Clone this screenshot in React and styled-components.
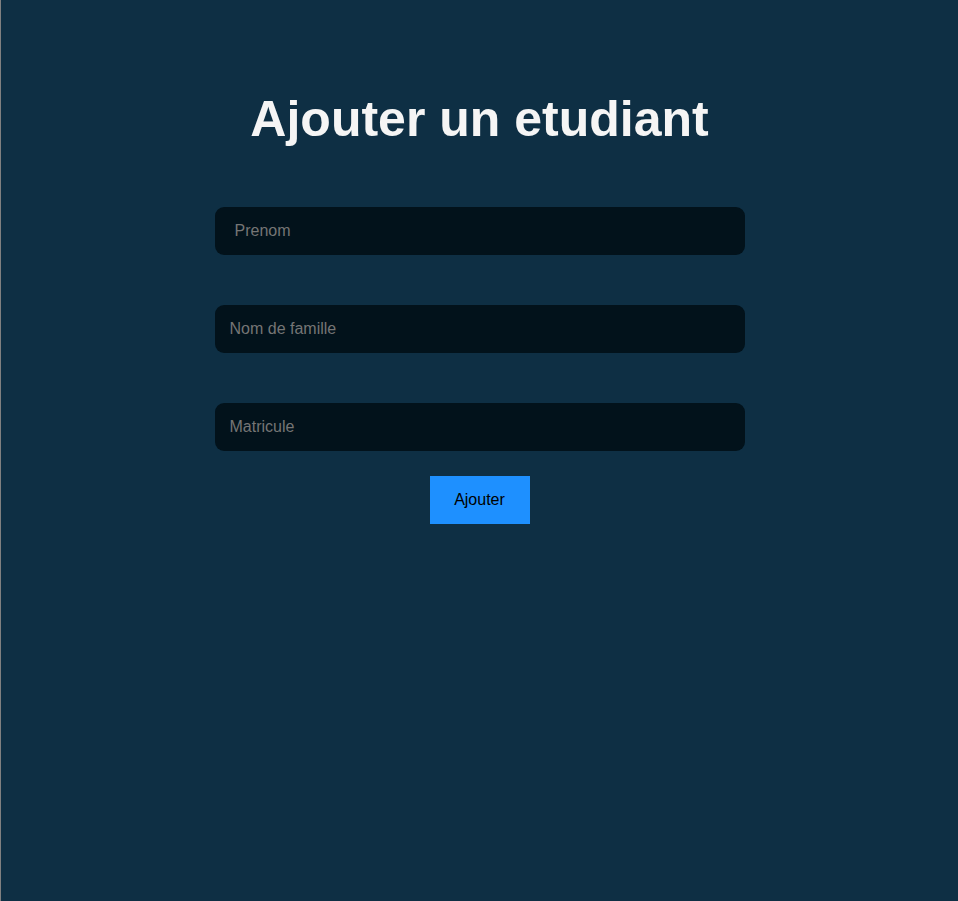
import React from 'react'
import styled, { createGlobalStyle } from 'styled-components'

const GlobalStyle = createGlobalStyle`
  html, body {
    margin: 0;
    padding: 0;
    background: #0e2f44;
    font-family: "Liberation Sans", Arial, sans-serif;
  }
`

const Page = styled.div`
  box-sizing: border-box;
  min-height: 100vh;
  border-left: 1px solid #808080;
  background: #0e2f44;
  display: flex;
  flex-direction: column;
  align-items: center;
  padding-top: 91px;
`

const Title = styled.h1`
  margin: 0 0 59px;
  font-size: 50px;
  font-weight: 700;
  line-height: 57px;
  color: #f5f5f5;
`

const Form = styled.form`
  display: flex;
  flex-direction: column;
  align-items: center;
  gap: 50px;
`

const Field = styled.input`
  box-sizing: border-box;
  width: 530px;
  height: 48px;
  padding: 0 ${({ $pad = 15 }) => $pad}px;
  border: none;
  border-radius: 9px;
  background: #02121b;
  color: #f5f5f5;
  font-family: inherit;
  font-size: 16px;
  outline: none;

  &::placeholder {
    color: #757575;
  }
`

const Button = styled.button`
  width: 100px;
  height: 48px;
  margin-top: -25px;
  border: none;
  background: #1e90ff;
  color: #000;
  font-family: inherit;
  font-size: 16px;
  cursor: pointer;
`

const App = () => (
  <>
    <GlobalStyle />
    <Page>
      <Title>Ajouter un etudiant</Title>
      <Form onSubmit={(e) => e.preventDefault()}>
        <Field placeholder="Prenom" $pad={20} />
        <Field placeholder="Nom de famille" />
        <Field placeholder="Matricule" />
        <Button type="submit">Ajouter</Button>
      </Form>
    </Page>
  </>
)

export default App
